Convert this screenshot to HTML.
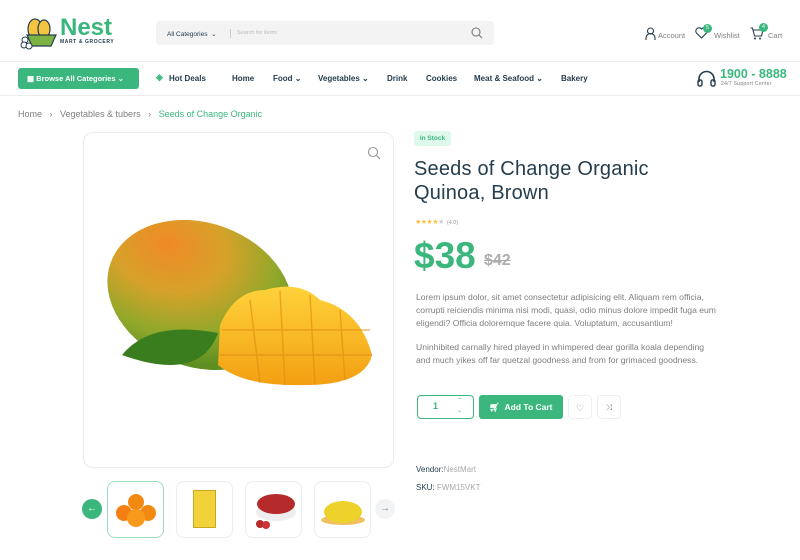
<!DOCTYPE html>
<html><head><meta charset="utf-8"><style>
*{margin:0;padding:0;box-sizing:border-box}
body{width:800px;height:560px;background:#fff;font-family:"Liberation Sans",sans-serif;color:#253d4e;position:relative;overflow:hidden}
.a{position:absolute}
.nav span{position:absolute;top:74px;font-size:8px;font-weight:bold;color:#253d4e}
p.t{font-size:8.6px;color:#7e7e7e;line-height:13px}
.th{position:absolute;top:481px;width:57px;height:57px;border:1px solid #ececec;border-radius:8px;background:#fff}
</style></head><body>
<!-- logo -->
<svg class="a" style="left:18px;top:16px" width="40" height="34" viewBox="0 0 40 34">
<ellipse cx="17" cy="13" rx="7" ry="10" fill="#f5c542" stroke="#253d4e" stroke-width="1.2"/>
<ellipse cx="26" cy="13" rx="6" ry="9" fill="#f5c542" stroke="#253d4e" stroke-width="1.2"/>
<path d="M9 19 L38 19 L33 30 L14 30 Z" fill="#7cb342" stroke="#253d4e" stroke-width="1.2"/>
<circle cx="7" cy="24" r="3" fill="#fff" stroke="#253d4e"/><circle cx="6" cy="29" r="3" fill="#fff" stroke="#253d4e"/><circle cx="11" cy="30" r="3" fill="#fff" stroke="#253d4e"/>
</svg>
<div class="a" style="left:60px;top:14px;font-size:24px;font-weight:bold;color:#3bb77e">Nest</div>
<div class="a" style="left:60px;top:39px;font-size:5px;font-weight:bold;color:#253d4e;letter-spacing:.6px">MART &amp; GROCERY</div>
<!-- search -->
<div class="a" style="left:156px;top:21px;width:338px;height:24px;background:#f3f3f3;border-radius:4px"></div>
<div class="a" style="left:167px;top:30px;font-size:6.5px;color:#253d4e">All Categories &nbsp;⌄</div>
<div class="a" style="left:230px;top:29px;width:1px;height:9px;background:#ccc"></div>
<div class="a" style="left:237px;top:30px;font-size:5.5px;color:#bbb">Search for items</div>
<svg class="a" style="left:471px;top:27px" width="12" height="12"><circle cx="5" cy="5" r="4" fill="none" stroke="#777" stroke-width="1.1"/><path d="M8 8l3 3" stroke="#777" stroke-width="1.1"/></svg>
<!-- header icons -->
<svg class="a" style="left:645px;top:27px" width="11" height="13"><circle cx="5.5" cy="4" r="3" fill="none" stroke="#253d4e" stroke-width="1.1"/><path d="M1 13v-2a4 4 0 0 1 9 0v2" fill="none" stroke="#253d4e" stroke-width="1.1"/></svg>
<div class="a" style="left:658px;top:31px;font-size:7.5px;color:#7e7e7e">Account</div>
<svg class="a" style="left:695px;top:27px" width="13" height="12"><path d="M6.5 11L1.5 6a3 3 0 0 1 5-4 3 3 0 0 1 5 4z" fill="none" stroke="#253d4e" stroke-width="1.1"/></svg>
<div class="a" style="left:703px;top:24px;width:9px;height:9px;border-radius:50%;background:#3bb77e;color:#fff;font-size:5px;text-align:center;line-height:9px">5</div>
<div class="a" style="left:714px;top:31px;font-size:7.5px;color:#7e7e7e">Wishlist</div>
<svg class="a" style="left:750px;top:27px" width="13" height="13"><path d="M0.5 1h2l2 8h7l1.5-6H3.5" fill="none" stroke="#253d4e" stroke-width="1.1"/><circle cx="5" cy="11.5" r="1" fill="#253d4e"/><circle cx="10" cy="11.5" r="1" fill="#253d4e"/></svg>
<div class="a" style="left:759px;top:23px;width:9px;height:9px;border-radius:50%;background:#3bb77e;color:#fff;font-size:5px;text-align:center;line-height:9px">4</div>
<div class="a" style="left:768px;top:31px;font-size:7.5px;color:#7e7e7e">Cart</div>
<div class="a" style="left:0;top:61px;width:800px;height:1px;background:#ececec"></div>
<!-- nav -->
<div class="a" style="left:18px;top:68px;width:121px;height:21px;background:#3bb77e;border-radius:3px;color:#fff;font-size:7.5px;font-weight:bold;line-height:21px;padding-left:9px">▦ Browse All Categories ⌄</div>
<div class="nav">
<span style="left:156px;color:#3bb77e;font-size:9px;top:72px">◈</span><span style="left:169px">Hot Deals</span>
<span style="left:232px">Home</span><span style="left:273px">Food ⌄</span><span style="left:318px">Vegetables ⌄</span>
<span style="left:387px">Drink</span><span style="left:426px">Cookies</span><span style="left:474px">Meat &amp; Seafood ⌄</span><span style="left:561px">Bakery</span>
</div>
<svg class="a" style="left:697px;top:70px" width="19" height="18"><path d="M2 12V9a7.5 7.5 0 0 1 15 0v3" fill="none" stroke="#253d4e" stroke-width="1.6"/><rect x="1" y="10" width="4" height="6" rx="1.5" fill="none" stroke="#253d4e" stroke-width="1.4"/><rect x="14" y="10" width="4" height="6" rx="1.5" fill="none" stroke="#253d4e" stroke-width="1.4"/></svg>
<div class="a" style="left:720px;top:67px;font-size:12.5px;font-weight:bold;color:#3bb77e">1900 - 8888</div>
<div class="a" style="left:721px;top:81px;font-size:5px;color:#7e7e7e;letter-spacing:.3px">24/7 Support Center</div>
<div class="a" style="left:0;top:95px;width:800px;height:1px;background:#ececec"></div>
<!-- breadcrumb -->
<div class="a" style="left:18px;top:109px;font-size:9px;color:#7e7e7e">Home &nbsp;&nbsp;›&nbsp;&nbsp; Vegetables &amp; tubers &nbsp;&nbsp;›&nbsp;&nbsp; <span style="color:#3bb77e">Seeds of Change Organic</span></div>
<!-- main image -->
<div class="a" style="left:83px;top:132px;width:311px;height:336px;border:1px solid #ececec;border-radius:10px"></div>
<svg class="a" style="left:367px;top:146px" width="14" height="14"><circle cx="6" cy="6" r="4.5" fill="none" stroke="#999" stroke-width="1.1"/><path d="M9.5 9.5l3.5 3.5" stroke="#999" stroke-width="1.1"/></svg>
<svg class="a" style="left:100px;top:215px" width="280" height="175" viewBox="0 0 280 175">
<defs><radialGradient id="m" cx="25%" cy="25%" r="80%"><stop offset="0" stop-color="#f08a24"/><stop offset=".4" stop-color="#d6a22a"/><stop offset=".75" stop-color="#8fa82a"/><stop offset="1" stop-color="#5f8f22"/></radialGradient>
<linearGradient id="c" x1="0" y1="0" x2="0" y2="1"><stop offset="0" stop-color="#ffd23a"/><stop offset="1" stop-color="#f2a012"/></linearGradient></defs>
<ellipse cx="100" cy="80" rx="95" ry="72" transform="rotate(20 100 80)" fill="url(#m)"/>
<path d="M22 140 Q50 105 118 118 Q100 168 22 140Z" fill="#3a7d1f"/>
<path d="M120 110 Q135 75 165 75 Q200 65 220 85 Q260 95 272 140 Q265 170 205 170 Q145 172 118 150Z" fill="url(#c)"/>
<path d="M150 85 L160 168 M180 76 L185 170 M210 80 L215 170 M240 95 L245 165 M122 115 L270 115 M120 140 L272 140" stroke="#e08a10" stroke-width="1.5" fill="none" opacity=".6"/>
</svg>
<!-- thumbs -->
<div class="a" style="left:82px;top:499px;width:20px;height:20px;border-radius:50%;background:#3bb77e;color:#fff;font-size:10px;text-align:center;line-height:20px">←</div>
<div class="th" style="left:107px;border-color:#9fdbbf"></div>
<div class="th" style="left:176px"></div><div class="th" style="left:245px"></div><div class="th" style="left:314px"></div>
<svg class="a" style="left:111px;top:488px" width="50" height="44"><circle cx="25" cy="14" r="8" fill="#f28a12"/><circle cx="13" cy="25" r="8" fill="#f57f10"/><circle cx="37" cy="25" r="8" fill="#f28a12"/><circle cx="25" cy="30" r="9" fill="#f79a1c"/></svg>
<div class="a" style="left:193px;top:490px;width:23px;height:38px;background:#f2d23a;border:1px solid #c9a820"></div>
<svg class="a" style="left:250px;top:488px" width="48" height="44"><ellipse cx="26" cy="24" rx="20" ry="9" fill="#eee"/><ellipse cx="26" cy="16" rx="19" ry="10" fill="#b52a2a"/><circle cx="10" cy="36" r="4" fill="#b52a2a"/><circle cx="16" cy="37" r="4" fill="#c33"/></svg>
<svg class="a" style="left:318px;top:492px" width="50" height="36"><ellipse cx="25" cy="28" rx="22" ry="5" fill="#f0c060"/><ellipse cx="25" cy="20" rx="19" ry="11" fill="#ecd22a"/></svg>
<div class="a" style="left:375px;top:499px;width:20px;height:20px;border-radius:50%;background:#f2f3f4;color:#7e7e7e;font-size:10px;text-align:center;line-height:20px">→</div>
<!-- right column -->
<div class="a" style="left:414px;top:131px;width:37px;height:15px;background:#def9ec;border-radius:3px;color:#3bb77e;font-size:6.5px;font-weight:bold;text-align:center;line-height:15px">In Stock</div>
<div class="a" style="left:414px;top:157px;font-size:20px;line-height:24px;color:#253d4e;letter-spacing:.2px">Seeds of Change Organic<br>Quinoa, Brown</div>
<div class="a" style="left:415px;top:218px;font-size:7px;color:#fdc040;letter-spacing:-.5px">★★★★<span style="color:#ccc">★</span> <span style="color:#999;font-size:5.5px;letter-spacing:0">&nbsp;(4.0)</span></div>
<div class="a" style="left:414px;top:235px;font-size:37px;font-weight:bold;color:#3bb77e">$38</div>
<div class="a" style="left:484px;top:252px;font-size:16px;font-weight:bold;color:#adadad;text-decoration:line-through">$42</div>
<p class="t a" style="left:416px;top:291px;width:300px">Lorem ipsum dolor, sit amet consectetur adipisicing elit. Aliquam rem officia, corrupti reiciendis minima nisi modi, quasi, odio minus dolore impedit fuga eum eligendi? Officia doloremque facere quia. Voluptatum, accusantium!</p>
<p class="t a" style="left:416px;top:341px;width:300px">Uninhibited carnally hired played in whimpered dear gorilla koala depending and much yikes off far quetzal goodness and from for grimaced goodness.</p>
<div class="a" style="left:417px;top:395px;width:57px;height:24px;border:1px solid #3bb77e;border-radius:4px"></div>
<div class="a" style="left:433px;top:401px;font-size:9px;font-weight:bold;color:#3bb77e">1</div>
<div class="a" style="left:457px;top:396px;font-size:6px;color:#3bb77e;line-height:10px">⌃<br>⌄</div>
<div class="a" style="left:479px;top:395px;width:84px;height:24px;background:#3bb77e;border-radius:3px;color:#fff;font-size:8.5px;font-weight:bold;line-height:24px;padding-left:10px">🛒︎ &nbsp;Add To Cart</div>
<div class="a" style="left:568px;top:395px;width:24px;height:24px;border:1px solid #f0f0f0;border-radius:4px;color:#888;font-size:9px;text-align:center;line-height:24px">♡</div>
<div class="a" style="left:597px;top:395px;width:24px;height:24px;border:1px solid #f0f0f0;border-radius:4px;color:#888;font-size:8px;text-align:center;line-height:24px">⤨</div>
<div class="a" style="left:416px;top:465px;font-size:8px;color:#253d4e">Vendor:<span style="color:#aaa">NestMart</span></div>
<div class="a" style="left:416px;top:483px;font-size:8px;color:#253d4e">SKU: <span style="color:#aaa">FWM15VKT</span></div>
</body></html>
